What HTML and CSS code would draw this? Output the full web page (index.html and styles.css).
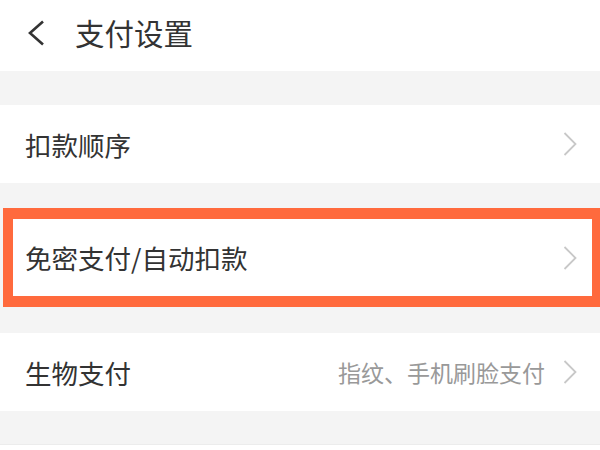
FILE: index.html
```html
<!DOCTYPE html>
<html>
    <head>
        <title>支付设置</title>
        <meta charset="UTF-8">
        <meta name="viewport" content="width=device-width, initial-scale=1.0">
        <link rel="stylesheet" href="styles.css">
    </head>
    <body>
        <div class="page">
            <div class="topbar">
                <svg class="back" width="18" height="26" viewBox="0 0 18 26">
                    <polyline points="16,1.5 3,13 16,24.5" fill="none" stroke="#333" stroke-width="2.6"/>
                </svg>
                <h1>支付设置</h1>
            </div>

            <div class="gap gap-top"></div>
            <div class="row">
                <span class="label">扣款顺序</span>
                <svg class="arrow" width="14" height="24" viewBox="0 0 14 24">
                    <polyline points="1.5,1 12.5,12 1.5,23" fill="none" stroke="#c8c8c8" stroke-width="1.8"/>
                </svg>
            </div>

            <div class="gap gap-mid"></div>
            <div class="row row-mark">
                <span class="label">免密支付/自动扣款</span>
                <svg class="arrow" width="14" height="24" viewBox="0 0 14 24">
                    <polyline points="1.5,1 12.5,12 1.5,23" fill="none" stroke="#c8c8c8" stroke-width="1.8"/>
                </svg>
            </div>

            <div class="gap gap-after"></div>
            <div class="row">
                <span class="label">生物支付</span>
                <span class="value">指纹、手机刷脸支付</span>
                <svg class="arrow" width="14" height="24" viewBox="0 0 14 24">
                    <polyline points="1.5,1 12.5,12 1.5,23" fill="none" stroke="#c8c8c8" stroke-width="1.8"/>
                </svg>
            </div>
            <div class="gap gap-end"></div>
            <div class="bottom"></div>
        </div>
    </body>
</html>
```

FILE: styles.css
```css
body{
    margin: 0;
    background: #fff;
    font-family: "Noto Sans CJK SC", "Liberation Sans", sans-serif;
}
.page{
    width: 600px;
    height: 450px;
    overflow: hidden;
    background: #f4f4f4;
}
.topbar{
    height: 71px;
    background: #fff;
    display: flex;
    align-items: center;
    padding: 0 0 6px 27px;
    box-sizing: border-box;
}
.topbar h1{
    margin: 0 0 0 30px;
    font-size: 29.5px;
    font-weight: normal;
    color: #333;
    line-height: 1;
}
.gap-top{ height: 34px; }
.gap-mid{ height: 25px; }
.gap-after{ height: 26px; }
.gap-end{ height: 33px; border-bottom: 1px solid #ececec; }
.row{
    height: 78px;
    background: #fff;
    display: flex;
    align-items: center;
    padding: 0 23px 0 25px;
    box-sizing: border-box;
}
.row .label{
    flex: 1;
    font-size: 26.5px;
    color: #333;
}
.row .value{
    font-size: 23px;
    color: #999;
    margin-right: 18px;
}
.row-mark{
    height: 99px;
    margin-left: 3px;
    border-style: solid;
    border-color: #ff6a3d;
    border-width: 11px 8px 11px 10px;
    padding: 0 15px 0 12px;
}
.bottom{
    height: 10px;
    background: #fff;
}
```
